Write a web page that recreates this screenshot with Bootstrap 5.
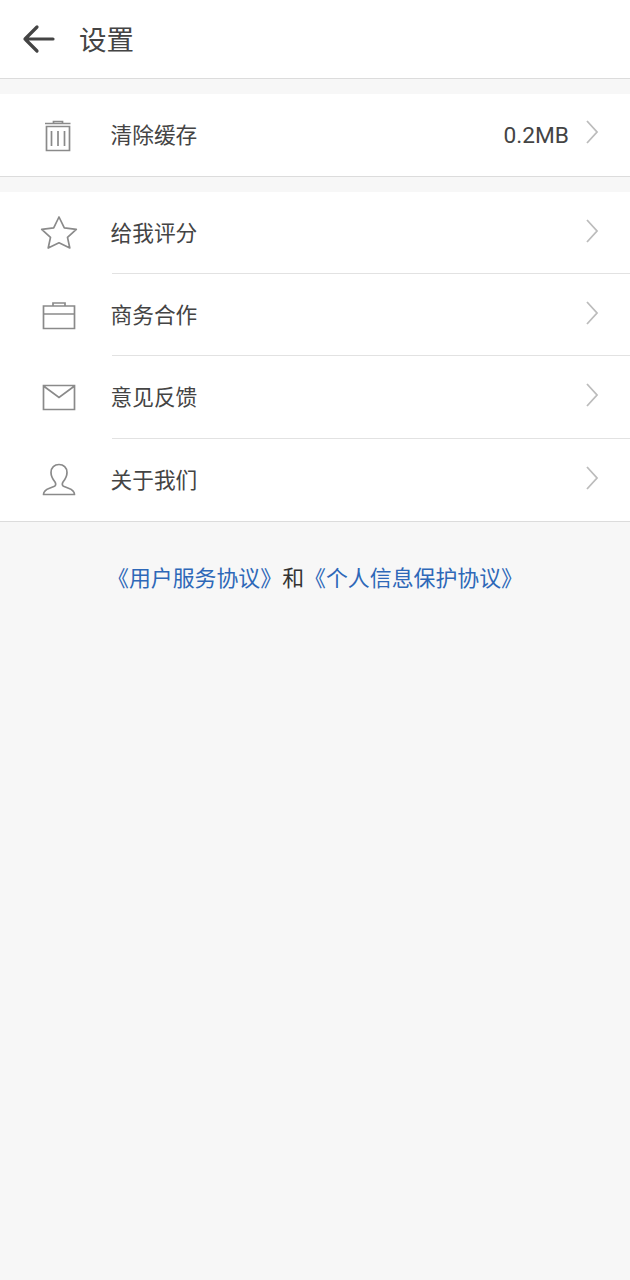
<!DOCTYPE html>
<html lang="zh-CN">
<head>
  <meta charset="UTF-8" />
  <meta name="viewport" content="width=device-width, initial-scale=1.0"/>
  <title>设置</title>
  <link href="https://cdn.jsdelivr.net/npm/bootstrap@5.3.3/dist/css/bootstrap.min.css" rel="stylesheet" />
  <style>
    body { background: #f7f7f7; font-family: Roboto, "Noto Sans CJK SC", sans-serif; color: #333; min-height: 1280px; }
    .top-bar { height: 79px; background: #fff; border-bottom: 1px solid #dcdcdc; padding-left: 22px; }
    .top-bar h1 { font-size: 27.5px; font-weight: 400; color: #444; margin: 0 0 0 23px; padding-top: 4px; line-height: 1; }
    .group-box { background: #fff; border-bottom: 1px solid #dcdcdc; margin-top: 15px; }
    .row-item { height: 82px; }
    .row-item.tall { height: 83px; }
    .icon-cell { width: 112px; padding-left: 40px; flex: none; }
    .row-body { height: 100%; padding-right: 30px; border-bottom: 1px solid #e2e2e2; }
    .row-item:last-child .row-body { border-bottom: 0; }
    .row-label { font-size: 21.7px; color: #444; margin-left: -1.5px; padding-top: 2px; }
    .row-label.low-txt { padding-top: 3px; }
    .row-value { font-size: 22.7px; color: #444; margin-right: 15px; padding-top: 2px; }
    .chev-mark { margin-bottom: 4px; }
    .chev-mark.chev-up { margin-bottom: 6px; }
    .agree-line { font-size: 21.9px; color: #333; margin-top: 41px; white-space: nowrap; }
    .agree-line a { color: #2e68b8; text-decoration: none; }
  </style>
</head>
<body>

<!-- top bar -->
<div class="top-bar d-flex align-items-center">
  <svg width="34" height="30" viewBox="0 0 34 30" fill="none" stroke="#444" stroke-width="3.2" stroke-linecap="round" stroke-linejoin="round">
    <path d="M31 15H3M15 3L3 15l12 12"/>
  </svg>
  <h1>设置</h1>
</div>

<!-- cache -->
<div class="group-box">
  <div class="row-item d-flex align-items-center">
    <div class="icon-cell">
      <svg width="36" height="38" viewBox="0 0 36 38" fill="none" stroke="#8a8a8a" stroke-width="1.7">
        <path d="M5 7.500h25.500M13.500 7.500V5.500h9v2M6.500 10.500h23v24h-23zM11.500 15v15M18 15v15M24.500 15v15"/>
      </svg>
    </div>
    <div class="row-body flex-grow-1 d-flex align-items-center border-0">
      <span class="row-label flex-grow-1">清除缓存</span>
      <span class="row-value">0.2MB</span>
      <svg class="chev-mark chev-up" width="16" height="26" viewBox="0 0 16 26" fill="none" stroke="#bcbcbc" stroke-width="1.800"><path d="M3 2l10 11L3 24"/></svg>
    </div>
  </div>
</div>

<!-- menu -->
<div class="group-box">
  <div class="row-item d-flex align-items-center">
    <div class="icon-cell">
      <svg width="38" height="36" viewBox="0 0 38 36" fill="none" stroke="#8a8a8a" stroke-width="1.7" stroke-linejoin="round">
        <path d="M19 2l5.300 10.800 12 1.500-8.800 8.100 2.300 10.600L19 27.800 8.200 33l2.300-10.600-8.800-8.100 12-1.500z"/>
      </svg>
    </div>
    <div class="row-body flex-grow-1 d-flex align-items-center">
      <span class="row-label low-txt flex-grow-1">给我评分</span>
      <svg class="chev-mark" width="16" height="26" viewBox="0 0 16 26" fill="none" stroke="#bcbcbc" stroke-width="1.800"><path d="M3 2l10 11L3 24"/></svg>
    </div>
  </div>
  <div class="row-item d-flex align-items-center">
    <div class="icon-cell">
      <svg width="36" height="30" viewBox="0 0 36 30" fill="none" stroke="#8a8a8a" stroke-width="1.7">
        <path d="M3.500 6h31v22.500h-31zM3.500 14h31M13 6V3h12v3"/>
      </svg>
    </div>
    <div class="row-body flex-grow-1 d-flex align-items-center">
      <span class="row-label low-txt flex-grow-1">商务合作</span>
      <svg class="chev-mark" width="16" height="26" viewBox="0 0 16 26" fill="none" stroke="#bcbcbc" stroke-width="1.800"><path d="M3 2l10 11L3 24"/></svg>
    </div>
  </div>
  <div class="row-item tall d-flex align-items-center">
    <div class="icon-cell">
      <svg width="36" height="28" viewBox="0 0 36 28" fill="none" stroke="#8a8a8a" stroke-width="1.7">
        <path d="M3.500 1.500h31v24h-31zM3.500 2l15.500 11.500L34.500 2"/>
      </svg>
    </div>
    <div class="row-body flex-grow-1 d-flex align-items-center">
      <span class="row-label flex-grow-1">意见反馈</span>
      <svg class="chev-mark" width="16" height="26" viewBox="0 0 16 26" fill="none" stroke="#bcbcbc" stroke-width="1.800"><path d="M3 2l10 11L3 24"/></svg>
    </div>
  </div>
  <div class="row-item d-flex align-items-center">
    <div class="icon-cell">
      <svg width="36" height="34" viewBox="0 0 36 34" fill="none" stroke="#8a8a8a" stroke-width="1.7" stroke-linejoin="round">
        <path d="M3.500 31.500h31c0-3.500-2.500-5-6-6.300l-5-1.900c-1.500-.8-1.500-2.800-.5-4.300 2.200-2.700 4-5.500 4-9.500 0-5-3.500-8-8-8s-8 3-8 8c0 4 1.800 6.800 4 9.500 1 1.500 1 3.500-.5 4.300l-5 1.900c-3.500 1.300-6 2.800-6 6.300z"/>
      </svg>
    </div>
    <div class="row-body flex-grow-1 d-flex align-items-center">
      <span class="row-label flex-grow-1">关于我们</span>
      <svg class="chev-mark" width="16" height="26" viewBox="0 0 16 26" fill="none" stroke="#bcbcbc" stroke-width="1.800"><path d="M3 2l10 11L3 24"/></svg>
    </div>
  </div>
</div>

<!-- agreements -->
<div class="agree-line text-center">
  <a href="#">《用户服务协议》</a>和<a href="#">《个人信息保护协议》</a>
</div>

<script src="https://cdn.jsdelivr.net/npm/bootstrap@5.3.3/dist/js/bootstrap.bundle.min.js"></script>
</body>
</html>
